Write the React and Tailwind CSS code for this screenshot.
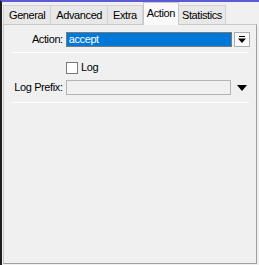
const tabs = [
  { label: "General", pad: "px-[5px]" },
  { label: "Advanced", pad: "px-[5px]" },
  { label: "Extra", pad: "px-[5px]" },
  { label: "Action", pad: "px-[3px]", active: true },
  { label: "Statistics", pad: "px-[3px]" },
];

export default function App() {
  return (
    <div
      className="w-[259px] h-[265px] bg-[#f0f0f0] border-t-2 border-t-[#5b5bd6] border-l-2 border-l-[#1e1e1e] relative text-[11px] tracking-[-0.4px] text-black overflow-hidden"
      style={{ fontFamily: '"Liberation Sans", Arial, sans-serif' }}
    >
      {/* tab strip */}
      <div className="flex items-end h-[22px] pl-[1px]">
        {tabs.map((t) =>
          t.active ? (
            <div
              key={t.label}
              className={`h-[23px] ${t.pad} bg-[#f9f9f9] border border-b-0 border-[#c8c8c8] flex items-center pb-[2px] -mb-[1px] relative z-10`}
            >
              {t.label}
            </div>
          ) : (
            <div
              key={t.label}
              className={`h-[19px] ${t.pad} bg-[#e8e8e8] border border-l-0 first:border-l border-b-0 border-[#d2d2d2] flex items-center`}
            >
              {t.label}
            </div>
          )
        )}
      </div>

      {/* panel */}
      <div className="ml-[1px] w-[254px] h-[240px] border border-[#c8c8c8] border-r-[#a0a0a0] border-b-[#a0a0a0] bg-[#f0f0f0] pt-[7px] px-[6px]">
        <div className="flex items-center h-[15px]">
          <div className="w-[56px] text-right pr-[3px] whitespace-nowrap">Action:</div>
          <div className="w-[167px] h-[15px] bg-[#0078d7] text-white px-[2px] flex items-center border border-[#7a7a7a]">
            accept
          </div>
          <div className="ml-[2px] w-[16px] h-[15px] border border-[#adadad] bg-[#fafafa] flex items-center justify-center">
            <svg width="8" height="8" viewBox="0 0 8 8">
              <rect x="1" y="0" width="6" height="1" fill="#000" />
              <path d="M0 2.5h8L4 7z" fill="#000" />
            </svg>
          </div>
        </div>
        <div className="h-[1px] bg-[#d0d0d0] mt-[5px] mx-[1px] border-b border-white" />

        <div className="flex items-center mt-[8px] h-[13px] pl-[56px]">
          <div className="w-[12px] h-[12px] border border-[#7a7a7a] bg-white" />
          <span className="ml-[3px]">Log</span>
        </div>

        <div className="flex items-center mt-[6px] h-[15px]">
          <div className="w-[56px] text-right pr-[3px] whitespace-nowrap">Log Prefix:</div>
          <div className="w-[167px] h-[15px] bg-[#f0f0f0] border border-[#b4b4b4]" />
          <div className="ml-[3px] w-[16px] h-[15px] flex items-center justify-center">
            <svg width="10" height="6" viewBox="0 0 10 6">
              <path d="M0 0h10L5 6z" fill="#000" />
            </svg>
          </div>
        </div>
        <div className="h-[1px] bg-[#d0d0d0] mt-[7px] mx-[1px] border-b border-white" />
      </div>
    </div>
  );
}
